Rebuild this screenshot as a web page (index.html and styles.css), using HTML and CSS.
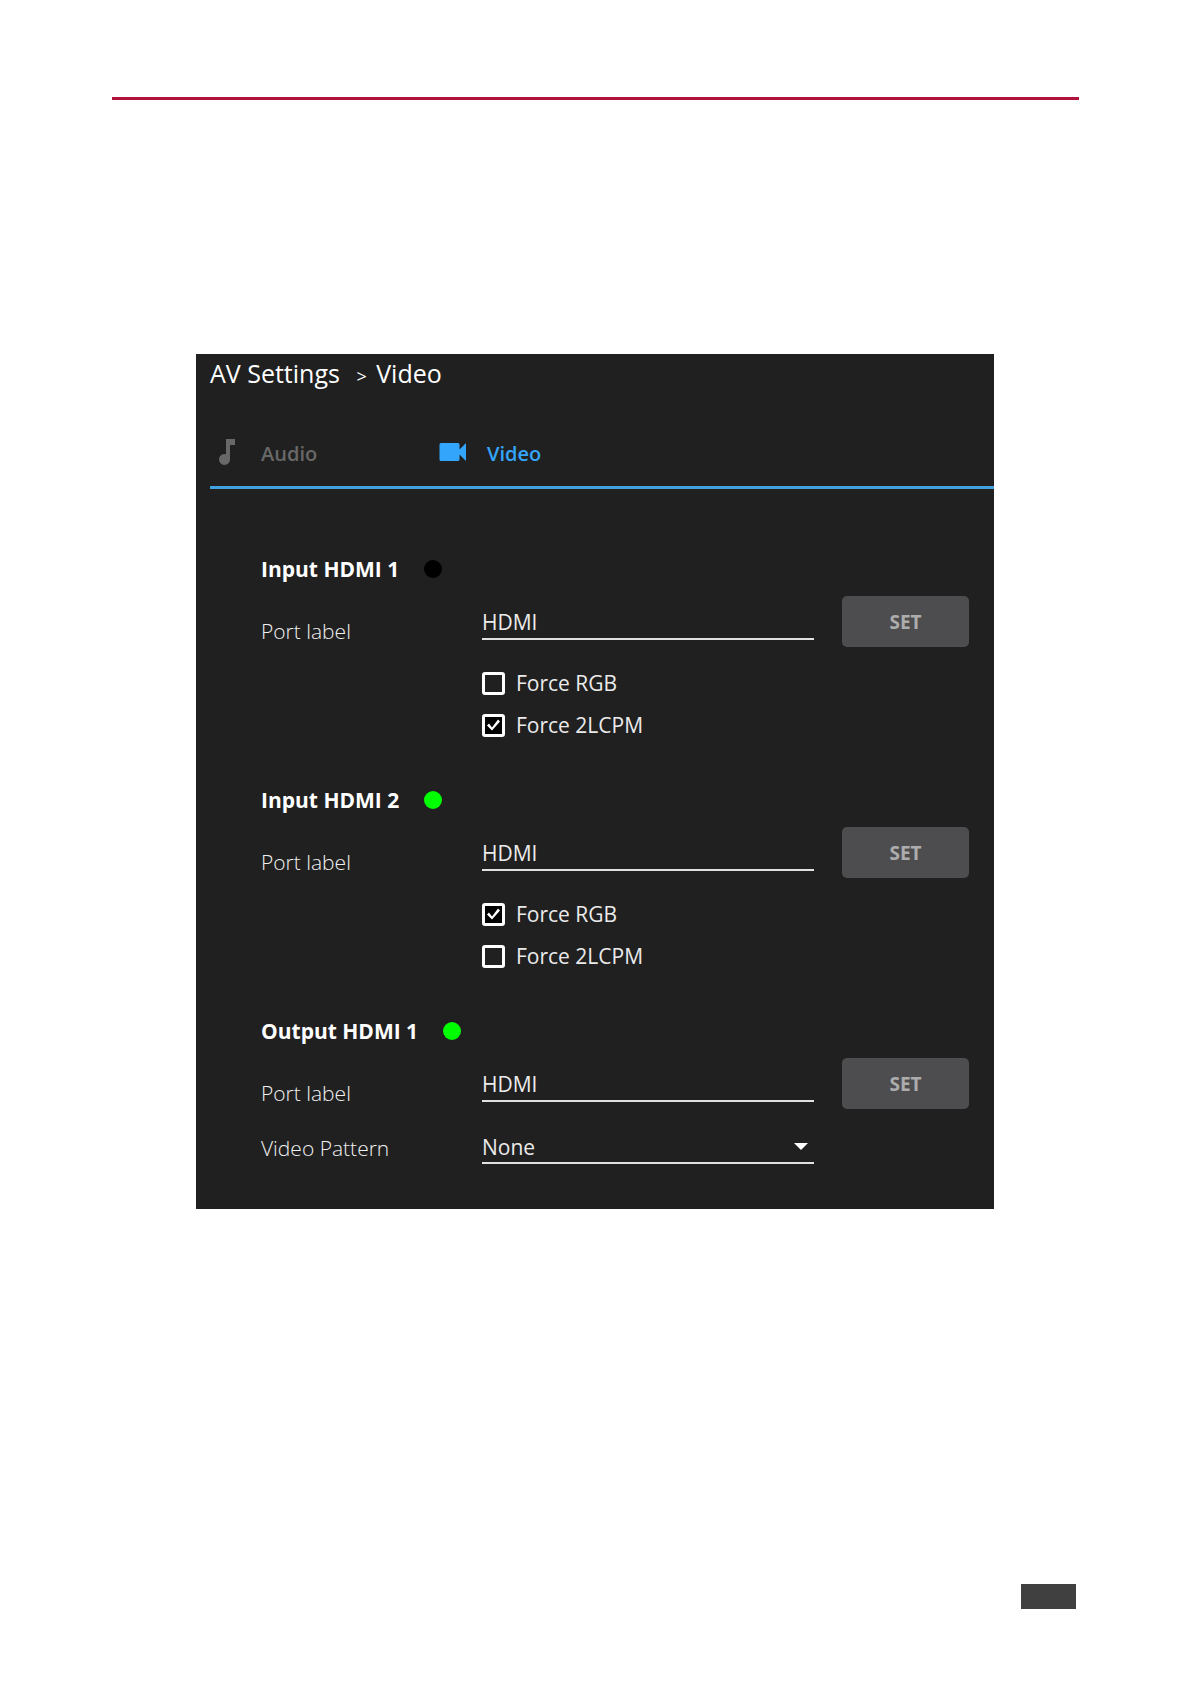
FILE: index.html
```
<!DOCTYPE html>
<html lang="en">

<head>
    <meta charset="UTF-8">
    <title>AV Settings - Video</title>
    <link rel="stylesheet" href="styles.css">
</head>

<body>
    <header class="page-rule"></header>

    <main class="panel">
        <h1 class="title">AV Settings <span class="arrow">&gt;</span> Video</h1>

        <nav class="tabs">
            <a class="tab" href="#audio">
                <svg class="tab-icon" viewBox="0 2 32 32" aria-hidden="true">
                    <path d="M16 3h9v6h-5v14.500a5.500 5.500 0 1 1-4-5.300z" fill="currentColor" />
                </svg>
                Audio
            </a>
            <a class="tab active" href="#video">
                <svg class="tab-icon" viewBox="-1 2 32 32" aria-hidden="true">
                    <path d="M4 7h17q1.500 0 1.500 1.500v5L29 7v18l-6.500-6.500v5q0 1.500-1.500 1.500H4q-1.500 0-1.500-1.500v-15Q2.500 7 4 7z" fill="currentColor" />
                </svg>
                Video
            </a>
        </nav>

        <form class="ports">
            <section class="port">
                <h2 class="port-name">Input HDMI 1 <span class="led"></span></h2>
                <div class="row">
                    <label class="label" for="in1">Port label</label>
                    <input class="field" type="text" id="in1" value="HDMI">
                    <button class="set" type="button">SET</button>
                </div>
                <div class="checks">
                    <label class="check"><input type="checkbox"> Force RGB</label>
                    <label class="check"><input type="checkbox" checked> Force 2LCPM</label>
                </div>
            </section>

            <section class="port">
                <h2 class="port-name">Input HDMI 2 <span class="led on"></span></h2>
                <div class="row">
                    <label class="label" for="in2">Port label</label>
                    <input class="field" type="text" id="in2" value="HDMI">
                    <button class="set" type="button">SET</button>
                </div>
                <div class="checks">
                    <label class="check"><input type="checkbox" checked> Force RGB</label>
                    <label class="check"><input type="checkbox"> Force 2LCPM</label>
                </div>
            </section>

            <section class="port">
                <h2 class="port-name">Output HDMI 1 <span class="led on"></span></h2>
                <div class="row">
                    <label class="label" for="out1">Port label</label>
                    <input class="field" type="text" id="out1" value="HDMI">
                    <button class="set" type="button">SET</button>
                </div>
                <div class="row pattern">
                    <label class="label" for="pattern">Video Pattern</label>
                    <div class="select">
                        <select id="pattern">
                            <option>None</option>
                        </select>
                    </div>
                </div>
            </section>
        </form>
    </main>

    <footer class="page-number"></footer>
</body>

</html>
```

FILE: styles.css
```
* {
    box-sizing: border-box;
}

body {
    display: flex;
    flex-direction: column;
    min-height: 100vh;
    margin: 0;
    padding: 97px 112px 75px;
    background-color: white;
    font-family: "Open Sans", "Noto Sans", sans-serif;
    font-size: 21px;
    line-height: 28px;
}

.page-rule {
    height: 3px;
    background-color: rgb(176, 18, 60);
}

.panel {
    margin: 254px 85px 0 84px;
    padding-bottom: 45px;
    background-color: rgb(32, 32, 32);
    color: white;
}

.title {
    margin: 0;
    padding: 3px 14px 0;
    font-size: 25px;
    font-weight: 400;
    line-height: 32px;
}

.arrow {
    margin: 0 3px 0 10px;
    font-size: 18px;
}

.tabs {
    display: flex;
    margin: 45px 0 0 14px;
    padding-bottom: 15px;
    border-bottom: 3px solid rgb(66, 160, 224);
}

.tab {
    display: flex;
    align-items: center;
    gap: 19px;
    width: 226px;
    height: 34px;
    color: rgb(104, 104, 104);
    font-size: 20px;
    font-weight: 600;
    text-decoration: none;
}

.tab-icon {
    width: 32px;
    height: 32px;
}

.tab.active {
    color: rgb(51, 165, 250);
}

.ports {
    display: flex;
    flex-direction: column;
    gap: 40px;
    padding: 66px 25px 0 65px;
}

.port-name {
    display: flex;
    align-items: center;
    gap: 25px;
    margin: 0 0 13px;
    font-size: 21px;
    font-weight: 700;
}

.led {
    width: 18px;
    height: 18px;
    border-radius: 50%;
    background-color: black;
}

.led.on {
    background-color: rgb(0, 255, 0);
}

.row {
    display: grid;
    grid-template-columns: 221px 1fr 155px;
}

.label {
    align-self: end;
    padding-bottom: 2px;
    color: rgb(240, 240, 240);
    font-weight: 300;
}

.field,
.select select {
    width: 100%;
    padding: 0;
    border: none;
    border-bottom: 2px solid rgb(225, 225, 225);
    border-radius: 0;
    outline: none;
    background: none;
    color: rgb(235, 235, 235);
    font: inherit;
    appearance: none;
}

.field {
    height: 44px;
    padding-top: 10px;
}

.set {
    justify-self: end;
    width: 127px;
    height: 51px;
    border: none;
    border-radius: 5px;
    background-color: rgb(77, 77, 79);
    color: rgb(172, 172, 172);
    font: inherit;
    font-size: 19px;
    font-weight: 700;
    cursor: pointer;
}

.checks {
    display: flex;
    flex-direction: column;
    margin: 15px 0 0 221px;
}

.check {
    display: flex;
    align-items: center;
    gap: 11px;
    height: 42px;
    color: rgb(235, 235, 235);
}

.check input {
    width: 23px;
    height: 23px;
    margin: 0;
    border: 3px solid white;
    border-radius: 3px;
    appearance: none;
}

.check input:checked {
    background-color: black;
}

.check input:checked::before {
    content: "";
    display: block;
    height: 17px;
    background-color: white;
    clip-path: polygon(2px 9px, 4px 7px, 7px 11px, 13px 3px, 15px 5px, 7px 14px);
}

.pattern {
    margin-top: 24px;
}

.select {
    position: relative;
}

.select select {
    display: block;
    height: 31px;
    padding-bottom: 1px;
}

.select::after {
    content: "";
    position: absolute;
    top: 10px;
    right: 6px;
    border: 7px solid transparent;
    border-top-color: white;
    border-bottom: none;
    pointer-events: none;
}

.page-number {
    align-self: flex-end;
    width: 55px;
    height: 25px;
    margin: auto 3px 0 0;
    background-color: rgb(64, 64, 64);
}
```
